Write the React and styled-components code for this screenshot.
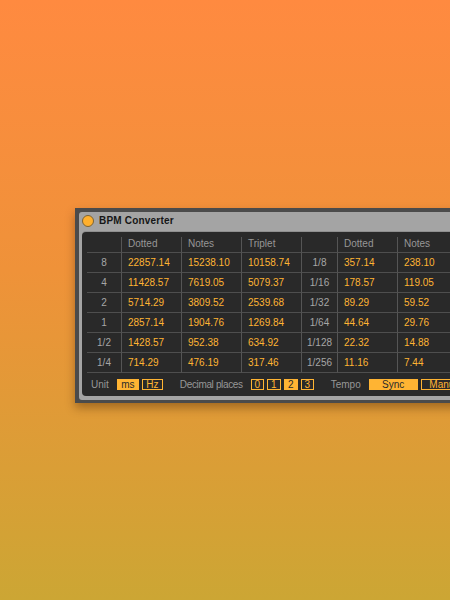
import styled, { createGlobalStyle } from "styled-components";

const GlobalStyle = createGlobalStyle`
  html, body {
    margin: 0;
    padding: 0;
    overflow: hidden;
  }
  body {
    font-family: "Liberation Sans", Arial, sans-serif;
  }
`;

const left = [
  ["8", "22857.14", "15238.10", "10158.74"],
  ["4", "11428.57", "7619.05", "5079.37"],
  ["2", "5714.29", "3809.52", "2539.68"],
  ["1", "2857.14", "1904.76", "1269.84"],
  ["1/2", "1428.57", "952.38", "634.92"],
  ["1/4", "714.29", "476.19", "317.46"],
];

const right = [
  ["1/8", "357.14", "238.10", "158.73"],
  ["1/16", "178.57", "119.05", "79.37"],
  ["1/32", "89.29", "59.52", "39.68"],
  ["1/64", "44.64", "29.76", "19.84"],
  ["1/128", "22.32", "14.88", "9.92"],
  ["1/256", "11.16", "7.44", "4.96"],
];

const headers = ["", "Dotted", "Notes", "Triplet", "", "Dotted", "Notes", "Triplet"];

const App = () => {
  return (
    <Page>
      <GlobalStyle />
      <Window>
        <Frame>
          <TitleBar>
            <Dot />
            <Title>BPM Converter</Title>
          </TitleBar>
          <Panel>
            <Grid>
              {headers.map((h, i) => (
                <HeadCell key={"h" + i} $first={i === 0}>
                  {h}
                </HeadCell>
              ))}
              {left.map((row, r) => {
                const cells = [...row, ...right[r]];
                return cells.map((c, i) => {
                  const isLabel = i === 0 || i === 4;
                  return isLabel ? (
                    <LabelCell key={r + "-" + i} $first={i === 0}>
                      {c}
                    </LabelCell>
                  ) : (
                    <ValueCell key={r + "-" + i}>{c}</ValueCell>
                  );
                });
              })}
            </Grid>
            <Footer>
              <Group>
                <FooterLabel>Unit</FooterLabel>
                <Buttons>
                  <Toggle $active $w={22}>ms</Toggle>
                  <Toggle $w={21}>Hz</Toggle>
                </Buttons>
              </Group>
              <Group>
                <FooterLabel $tight>Decimal places</FooterLabel>
                <Buttons>
                  <Toggle $w={13}>0</Toggle>
                  <Toggle $w={14}>1</Toggle>
                  <Toggle $active $w={14}>2</Toggle>
                  <Toggle $w={13}>3</Toggle>
                </Buttons>
              </Group>
              <Group>
                <FooterLabel>Tempo</FooterLabel>
                <Buttons>
                  <Toggle $active $w={49}>Sync</Toggle>
                  <Toggle $w={50}>Manual</Toggle>
                </Buttons>
              </Group>
            </Footer>
          </Panel>
        </Frame>
      </Window>
    </Page>
  );
};

const Page = styled.div`
  width: 450px;
  height: 600px;
  box-sizing: border-box;
  padding: 208px 0 0 75px;
  background: linear-gradient(180deg, #ff8a40 0%, #ef9239 45%, #cca634 100%);
  overflow: hidden;
`;

const Window = styled.div`
  width: 560px;
  background: #4b4b4b;
  padding: 4px 0 3px 4px;
  box-shadow: 0 5px 9px rgba(70, 35, 0, 0.4);
`;

const Frame = styled.div`
  background: #a4a4a4;
  border-radius: 3px 0 0 3px;
  padding: 0 0 4px 3px;
`;

const TitleBar = styled.div`
  height: 20px;
  display: flex;
  align-items: center;
  gap: 5px;
  padding-bottom: 3px;
  box-sizing: border-box;
`;

const Dot = styled.div`
  width: 12px;
  height: 12px;
  box-sizing: border-box;
  border-radius: 50%;
  background: #ffb02e;
  border: 1px solid #7d6333;
`;

const Title = styled.span`
  font-size: 10px;
  font-weight: bold;
  color: #161616;
  letter-spacing: 0.2px;
`;

const Panel = styled.div`
  background: #292929;
  border-radius: 4px 0 0 4px;
  padding: 5px 0 0 5px;
  box-shadow: 0 -1px 0 #8f8f8f;
`;

const Grid = styled.div`
  display: grid;
  grid-template-columns: 34px 60px 60px 60px 36px 60px 60px 60px;
  grid-template-rows: 16px repeat(6, 20px);
`;

const Cell = styled.div`
  box-sizing: border-box;
  border-bottom: 1px solid #4e4e4e;
  border-left: ${(p) => (p.$first ? "none" : "1px solid #555555")};
  font-size: 10px;
  display: flex;
  align-items: center;
  white-space: nowrap;
`;

const HeadCell = styled(Cell)`
  color: #979797;
  padding: 0 0 2px 6px;
`;

const LabelCell = styled(Cell)`
  color: #a6a6a6;
  justify-content: center;
`;

const ValueCell = styled(Cell)`
  color: #ffb433;
  padding-left: 6px;
`;

const Footer = styled.div`
  height: 23px;
  display: flex;
  align-items: center;
  gap: 17px;
  padding-left: 4px;
`;

const Group = styled.div`
  display: flex;
  align-items: center;
  gap: 8px;
`;

const FooterLabel = styled.span`
  font-size: 10px;
  color: #979797;
  white-space: nowrap;
  letter-spacing: ${(p) => (p.$tight ? "-0.35px" : "0")};
`;

const Buttons = styled.div`
  display: flex;
  gap: 3px;
`;

const Toggle = styled.div`
  width: ${(p) => p.$w}px;
  height: 11px;
  box-sizing: border-box;
  border: 1px solid #ffb433;
  background: ${(p) => (p.$active ? "#ffb433" : "transparent")};
  color: ${(p) => (p.$active ? "#2a2a2a" : "#ffb433")};
  font-size: 10px;
  line-height: 9px;
  display: flex;
  align-items: center;
  justify-content: center;
  white-space: nowrap;
`;

export default App;
